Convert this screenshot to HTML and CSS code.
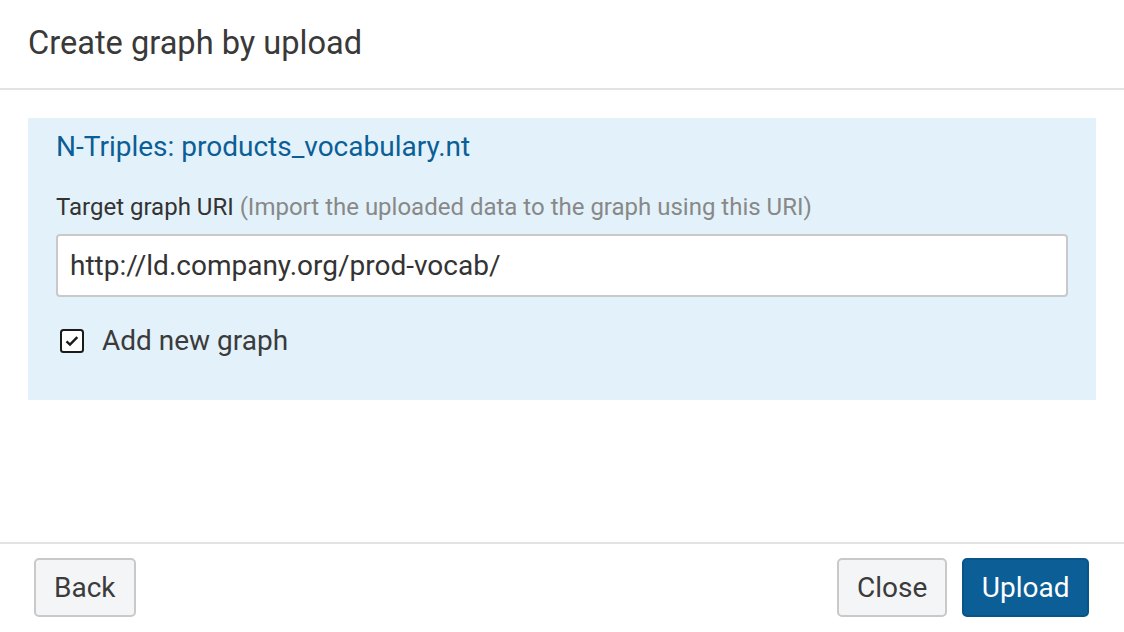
FILE: index.html
```html
<!DOCTYPE html>
<html lang="en">
<head>
<meta charset="utf-8">
<title>Create graph by upload</title>
<link rel="stylesheet" href="styles.css">
</head>
<body>
<div class="dialog">
  <header class="dialog-header">
    <h1 class="dialog-title">Create graph by upload</h1>
  </header>
  <main class="dialog-body">
    <section class="panel">
      <h2 class="panel-title">N-Triples: products_vocabulary.nt</h2>
      <label class="field-label" for="uri">Target graph URI <span class="hint">(Import the uploaded data to the graph using this URI)</span></label>
      <input class="text-input" id="uri" type="text" value="http://ld.company.org/prod-vocab/">
      <label class="check-row">
        <span class="checkbox">
          <svg viewBox="0 0 24 24" width="24" height="24"><rect x="1" y="1" width="22" height="22" rx="2.5" fill="#fff" stroke="#1a1a1a" stroke-width="2"/><path d="M6.5 12.3 L10 15.6 L17.3 8.2" fill="none" stroke="#1a1a1a" stroke-width="2.4"/></svg>
        </span>
        <span class="check-text">Add new graph</span>
      </label>
    </section>
  </main>
  <footer class="dialog-footer">
    <button class="btn">Back</button>
    <div class="footer-right">
      <button class="btn">Close</button>
      <button class="btn btn-primary">Upload</button>
    </div>
  </footer>
</div>
</body>
</html>
```
FILE: styles.css
```css
html, body {
  margin: 0;
  padding: 0;
  background: #fff;
}
body {
  font-family: Roboto, "Liberation Sans", sans-serif;
  color: #333;
}
.dialog {
  width: 1124px;
  height: 632px;
  display: flex;
  flex-direction: column;
  box-sizing: border-box;
}
.dialog-header {
  height: 88px;
  border-bottom: 2px solid #e3e3e3;
  display: flex;
  align-items: center;
  padding: 0 28px;
  box-sizing: content-box;
}
.dialog-title {
  margin: 0 0 2px;
  font-size: 32.6px;
  line-height: 40px;
  font-weight: 400;
  color: #393939;
}
.dialog-body {
  flex: 1;
  padding: 28px 28px 0;
}
.panel {
  background: #e3f2fa;
  height: 282px;
  box-sizing: border-box;
  padding: 11px 28px 0;
  display: flex;
  flex-direction: column;
}
.panel-title {
  margin: 0;
  font-size: 28px;
  font-weight: 400;
  color: #0b5e96;
  line-height: 36px;
}
.field-label {
  margin-top: 28px;
  font-size: 24px;
  line-height: 28px;
  color: #333;
}
.hint {
  color: #888;
}
.text-input {
  margin-top: 13px;
  height: 63px;
  flex: none;
  box-sizing: border-box;
  border: 2px solid #c9c9c9;
  border-radius: 4px;
  background: #fff;
  padding: 0 12px;
  font-family: Roboto, "Liberation Sans", sans-serif;
  font-size: 28px;
  color: #333;
  outline: none;
}
.check-row {
  margin-top: 26px;
  display: flex;
  align-items: center;
  gap: 18px;
  padding-left: 4px;
}
.checkbox {
  display: flex;
  width: 24px;
  height: 24px;
}
.check-text {
  font-size: 28px;
  line-height: 36px;
  color: #3b3b3b;
}
.dialog-footer {
  height: 88px;
  border-top: 2px solid #e3e3e3;
  display: flex;
  align-items: center;
  justify-content: space-between;
  padding: 0 35px 0 34px;
}
.footer-right {
  display: flex;
  gap: 15px;
}
.btn {
  height: 59px;
  padding: 0 18px;
  border: 2px solid #c9c9c9;
  border-radius: 5px;
  background: #f4f5f7;
  font-family: Roboto, "Liberation Sans", sans-serif;
  font-size: 28px;
  color: #3b3b3b;
  margin-top: -1px;
}
.btn-primary {
  padding: 0 17.5px;
  background: #0b5e96;
  border-color: #0a5587;
  color: #fff;
}
```
